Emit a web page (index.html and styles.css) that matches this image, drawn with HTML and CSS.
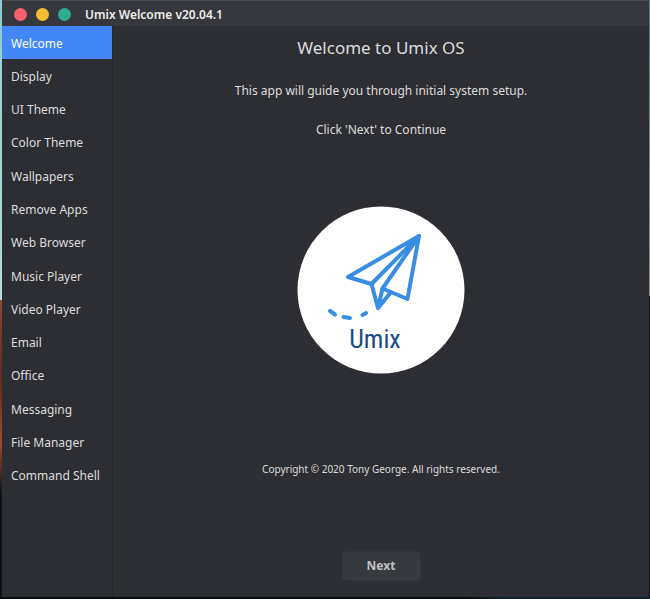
FILE: index.html
```html
<!DOCTYPE html>
<html lang="en">
<head>
<meta charset="utf-8">
<title>Umix Welcome v20.04.1</title>
<link rel="stylesheet" href="styles.css">
</head>
<body>
<div class="window">
  <header class="titlebar">
    <div class="controls">
      <button class="control close" type="button" aria-label="Close"></button>
      <button class="control minimize" type="button" aria-label="Minimize"></button>
      <button class="control maximize" type="button" aria-label="Maximize"></button>
    </div>
    <span class="title">Umix Welcome v20.04.1</span>
  </header>
  <div class="content">
    <nav class="sidebar">
      <ul class="steps">
        <li><a class="step active" href="#welcome" aria-current="page">Welcome</a></li>
        <li><a class="step" href="#display">Display</a></li>
        <li><a class="step" href="#ui-theme">UI Theme</a></li>
        <li><a class="step" href="#color-theme">Color Theme</a></li>
        <li><a class="step" href="#wallpapers">Wallpapers</a></li>
        <li><a class="step" href="#remove-apps">Remove Apps</a></li>
        <li><a class="step" href="#web-browser">Web Browser</a></li>
        <li><a class="step" href="#music-player">Music Player</a></li>
        <li><a class="step" href="#video-player">Video Player</a></li>
        <li><a class="step" href="#email">Email</a></li>
        <li><a class="step" href="#office">Office</a></li>
        <li><a class="step" href="#messaging">Messaging</a></li>
        <li><a class="step" href="#file-manager">File Manager</a></li>
        <li><a class="step" href="#command-shell">Command Shell</a></li>
      </ul>
    </nav>
    <main class="page">
      <h1 class="heading">Welcome to Umix OS</h1>
      <p class="intro">This app will guide you through initial system setup.</p>
      <p class="intro">Click 'Next' to Continue</p>
      <svg class="logo" viewBox="0 0 168 168" role="img" aria-label="Umix">
        <circle class="logo-disc" cx="84" cy="84" r="83.500"/>
        <g class="logo-plane">
          <path d="M122 30 51 71 74.500 78Z"/>
          <path d="M122 30 110.500 93 85.500 82.500Z"/>
          <path d="M74.500 78 81 102 85.500 82.500M81 102 92.500 88"/>
        </g>
        <path class="logo-trail" d="M33 105 38 108.500M46.500 111 53 112M65.500 109 69 107"/>
        <text class="logo-name" x="78" y="142">Umix</text>
      </svg>
      <p class="copyright">Copyright © 2020 Tony George. All rights reserved.</p>
      <button class="next" type="button">Next</button>
    </main>
  </div>
</div>
</body>
</html>
```

FILE: styles.css
```css
* {
  box-sizing: border-box;
}

body {
  margin: 0;
  min-height: 100vh;
  display: flex;
  padding: 0 1px 2px 2px;
  font-family: "Noto Sans", "Open Sans", sans-serif;
  font-size: 12px;
  line-height: 18px;
  color: #dcdcdd;
  /* The desktop shows in a thin rim round the window. */
  background:
    linear-gradient(#8ecbd0, #b9dcd8) left top / 2px 300px no-repeat,
    linear-gradient(#8a4a38, #5e2c20 40%, #a04a2c 75%, #15171c) left 0 top 300px / 2px 190px no-repeat,
    linear-gradient(#527c88, #8a9795) right top / 1px 296px no-repeat,
    linear-gradient(90deg, #0b0c10 72%, #10232e 78%) left bottom / 100% 2px no-repeat,
    #0e1116;
}

.window {
  flex: 1;
  display: flex;
  flex-direction: column;
  background: #2d2e33;
}

.titlebar {
  display: flex;
  align-items: center;
  gap: 14px;
  height: 26px;
  padding: 2px 12px 0;
  background: #37383d;
  border-top: 1px solid #48494e;
}

.controls {
  display: flex;
  gap: 9px;
}

.control {
  width: 13px;
  height: 13px;
  padding: 0;
  border: 0;
  border-radius: 50%;
}

.close {
  background: #f5606a;
}

.minimize {
  background: #f4bd34;
}

.maximize {
  background: #2eac8e;
}

.title {
  font-weight: 600;
  color: #ececed;
}

.content {
  flex: 1;
  display: grid;
  grid-template-columns: 111px 1fr;
}

.sidebar {
  border-right: 1px solid #25262a;
}

.steps {
  display: grid;
  grid-auto-rows: 1fr;
  min-height: 466px;
  margin: 0;
  padding: 0;
  list-style: none;
}

.step {
  display: flex;
  align-items: center;
  height: 100%;
  padding: 2px 0 0 9px;
  color: inherit;
  text-decoration: none;
}

.active {
  background: #4287f5;
  color: #ffffff;
}

.page {
  display: flex;
  flex-direction: column;
  align-items: center;
  padding: 9px 0 16px;
}

.heading {
  margin: 0 0 21px;
  font-size: 17px;
  font-weight: 400;
  line-height: 26px;
}

.intro {
  margin: 0 0 21px;
}

.logo {
  width: 168px;
  height: 168px;
  margin: 46px 0 86px;
}

.logo-disc {
  fill: #ffffff;
}

.logo-plane,
.logo-trail {
  fill: none;
  stroke: #378de2;
  stroke-width: 4;
  stroke-linecap: round;
  stroke-linejoin: round;
}

.logo-name {
  fill: #174a88;
  font-family: "Liberation Sans Narrow", "Roboto Condensed", "Open Sans Condensed", Roboto, sans-serif;
  font-size: 26px;
  text-anchor: middle;
}

.copyright {
  margin: 0;
  font-size: 10px;
}

.next {
  min-width: 79px;
  height: 30px;
  margin-top: auto;
  border: 1px solid #303338;
  border-radius: 3px;
  background: #36393e;
  color: #c0c1c3;
  font: inherit;
  font-weight: 700;
}
```
